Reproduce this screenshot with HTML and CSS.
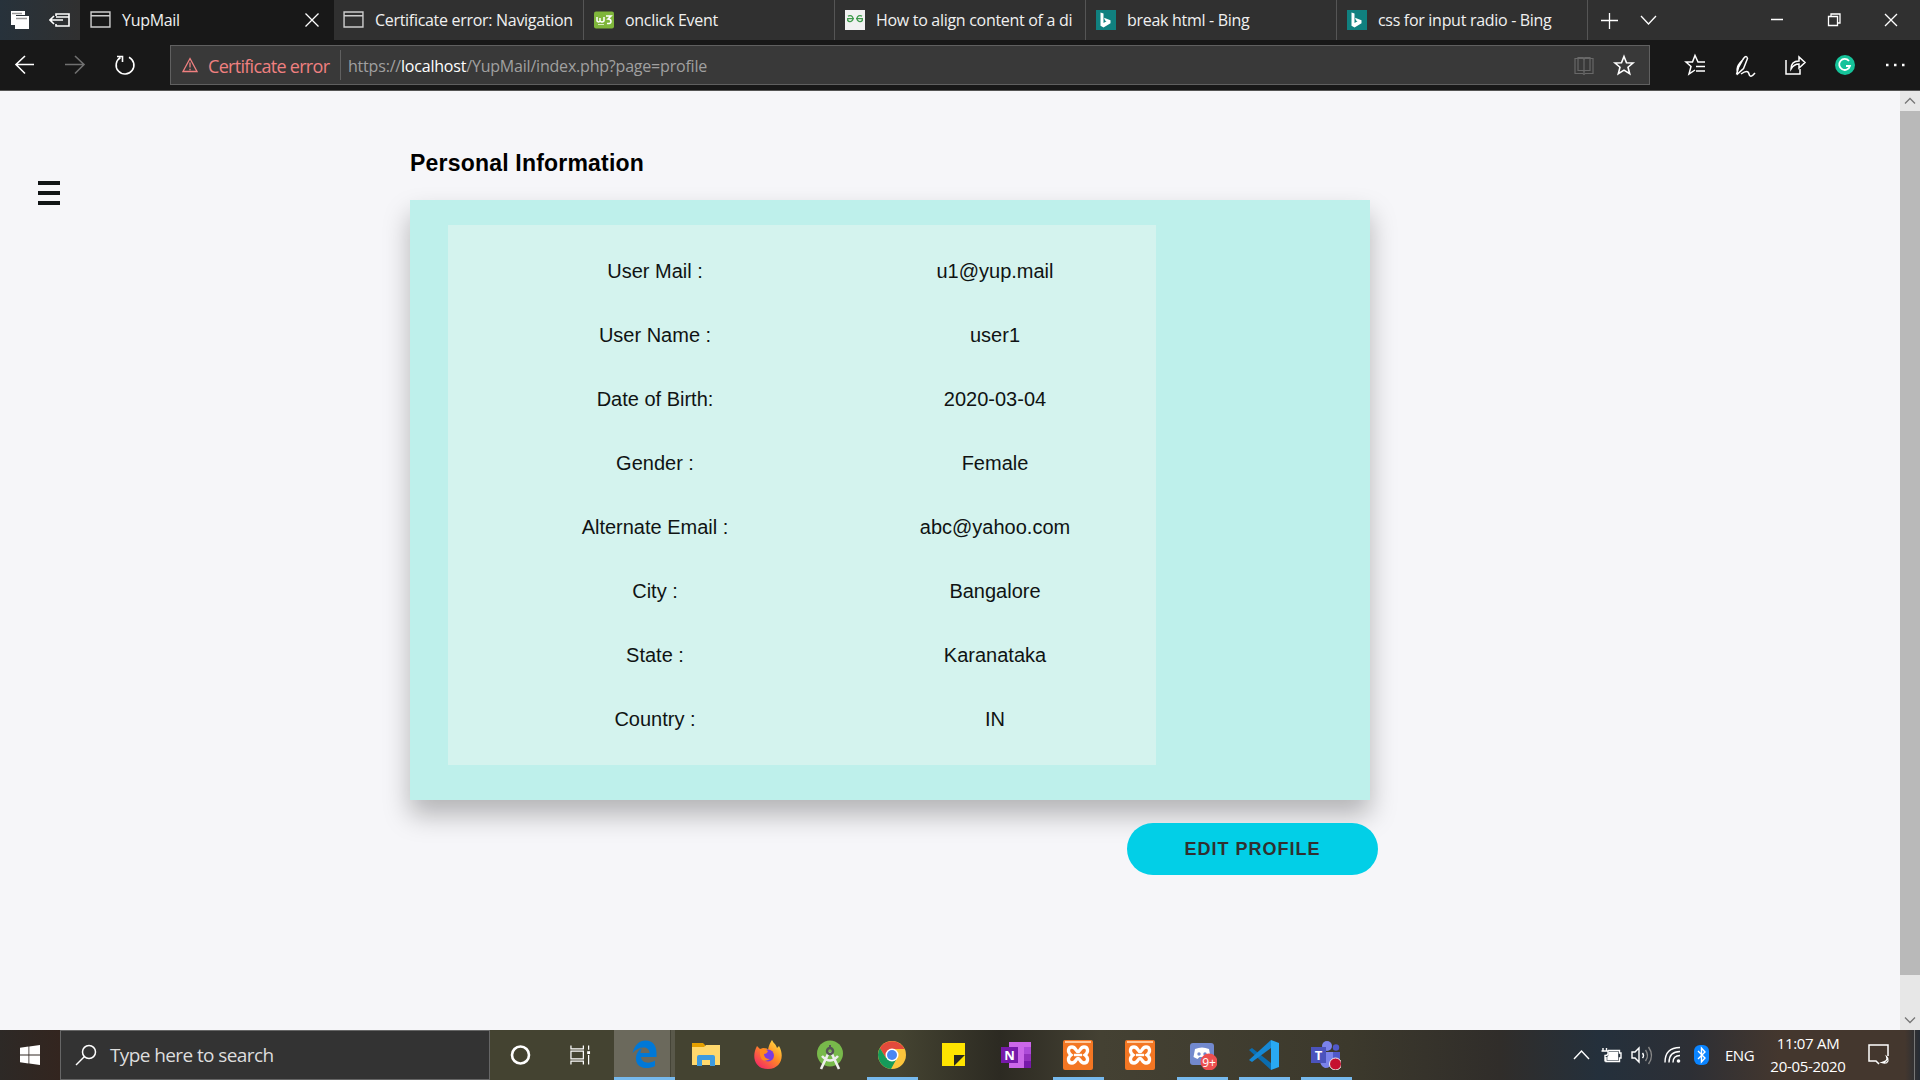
FILE: index.html
```html
<!DOCTYPE html>
<html lang="en">
<head>
<meta charset="utf-8">
<title>YupMail</title>
<link rel="stylesheet" href="styles.css">
</head>
<body>
<header class="tabs">
  <div class="tools">
    <svg width="20" height="24" viewBox="0 0 20 24"><path d="M1 3h14v4H6v10H1z" fill="#fff"/><path d="M5 8h14v13H5z" fill="#fff"/><path d="M2 5.500h10M6 10.500h11" stroke="#999" stroke-width="1.500"/></svg>
    <svg width="22" height="20" viewBox="0 0 22 20" fill="none" stroke="#fff" stroke-width="1.600"><path d="M7 6V4h13v12H7v-2M7 7h13M1 10h13M5 6l-4 4 4 4"/></svg>
  </div>
  <div class="tab first active"><svg class="page" viewBox="0 0 22 18"><path d="M1 1h20v16H1zM1 5h20"/></svg><span>YupMail</span><svg class="close" viewBox="0 0 14 14"><path d="M.5.5l13 13m0-13l-13 13"/></svg></div>
  <div class="tab second"><svg class="page" viewBox="0 0 22 18"><path d="M1 1h20v16H1zM1 5h20"/></svg><span>Certificate error: Navigation</span></div>
  <div class="tab"><svg class="fav" viewBox="0 0 20 20"><rect y="1.500" width="20" height="17" rx="2" fill="#7fb63b"/><path d="M3 7v4q2 2 3 0V8v3q2 2 4 0V7M12 6h5l-3 3q3 0 3 2.500t-4 2" fill="none" stroke="#fff" stroke-width="1.500"/><path d="M4 14.500h6" stroke="#d8ecc0"/></svg><span>onclick Event</span></div>
  <div class="tab"><svg class="fav" viewBox="0 0 20 20"><path fill="#f1f1f1" d="M0 0h20v20H0z"/><path d="M3 6.300A3 3 0 1 1 2.700 10.500V8.700H9M17 6.300A3 3 0 1 0 17.300 10.500V8.700H11" fill="none" stroke="#3f9a4c" stroke-width="1.300"/></svg><span>How to align content of a di</span></div>
  <div class="tab"><svg class="fav" viewBox="0 0 20 20"><path fill="#10807f" d="M0 0h20v20H0z"/><path d="M4.500 2.500l3 1v9.500l3-1.700-1.500-.8-1-2.800 6.500 2.500v3L7.500 17.500l-3-1.800z" fill="#fff"/></svg><span>break html - Bing</span></div>
  <div class="tab"><svg class="fav" viewBox="0 0 20 20"><path fill="#10807f" d="M0 0h20v20H0z"/><path d="M4.500 2.500l3 1v9.500l3-1.700-1.500-.8-1-2.800 6.500 2.500v3L7.500 17.500l-3-1.800z" fill="#fff"/></svg><span>css for input radio - Bing</span></div>
  <svg class="controls" width="331" height="40" viewBox="0 0 331 40" fill="none" stroke="#fff" stroke-width="1.300"><path d="M13 20.500h17M21.500 13v16M53 16l7.500 8 7.500-8M183 19.500h12M240.500 16.500h9v9h-9zM243 16v-2h9v9h-2.500M297 14l12 12m0-12l-12 12"/></svg>
</header>
<nav class="bar">
  <svg class="nav-icons" width="170" height="50" viewBox="0 0 170 50" fill="none" stroke-width="1.600"><path d="M34 24.500H16M25 16l-9 8.500 9 9" stroke="#fff"/><path d="M65 24.500h19M75 16l9 8.500-9 9" stroke="#707070"/><path d="M120.500 17.500a8.900 8.900 0 1 0 8.500-.3M117 16.500h5.500V22" stroke="#fff"/></svg>
  <div class="address">
    <svg width="16" height="16" viewBox="0 0 16 16" fill="none" stroke="#f08080" stroke-width="1.300"><path d="M8 1.500L15 14.500H1zM8 5.500v5M8 11.800v1.400"/></svg>
    <span class="cert">Certificate error</span>
    <span class="url">https://<b>localhost</b>/YupMail/index.php?page=profile</span>
    <svg class="address-icons" width="75" height="38" viewBox="0 0 75 38" fill="none"><path d="M1 12.500h8l1 1 1-1h8v15h-8l-1 1-1-1H1zM10 14v13M4 11.500h5l1 1 1-1h5v13h-5l-1 1-1-1H4z" stroke="#686868" stroke-width="1.200"/><path d="M50 10.500l2.500 6.200 6.500.3-5 4.200 1.700 6.500-5.700-3.600-5.700 3.600L46 21.200 41 17l6.500-.3z" stroke="#fff" stroke-width="1.600"/></svg>
  </div>
  <svg class="actions" width="270" height="50" viewBox="0 0 270 50" fill="none" stroke="#fff" stroke-width="1.500"><path d="M54 22H48L45 15.500l-2.500 6.500H36l5 4.500-2 7.500 6-4M46 26.500h9M48 22h7M46 31h9"/><path d="M86.500 34.500l2-7 5-9q3-4 4 0l-4 10-6 5.500q-1-6 1-9t5-6M91 34q7-5 8 0t6-1"/><path d="M136 20v14h14v-5M141 29q0-8 8-8v-4l6 5.500-6 5.500v-4q-5 0-8 5z"/><circle cx="195" cy="25" r="10" fill="#15c39a" stroke="none"/><path d="M199 21a5.500 5.500 0 1 0 1 5h-4" stroke-width="1.800"/><path d="M236 25h2.500M244 25h2.500M252 25h2.500" stroke-width="2.400"/></svg>
</nav>
<main class="viewport">
  <div class="menu"><i></i><i></i><i></i></div>
  <section class="profile">
    <h1>Personal Information</h1>
    <div class="card">
      <dl class="details">
        <dt>User Mail :</dt><dd>u1@yup.mail</dd>
        <dt>User Name :</dt><dd>user1</dd>
        <dt>Date of Birth:</dt><dd>2020-03-04</dd>
        <dt>Gender :</dt><dd>Female</dd>
        <dt>Alternate Email :</dt><dd>abc@yahoo.com</dd>
        <dt>City :</dt><dd>Bangalore</dd>
        <dt>State :</dt><dd>Karanataka</dd>
        <dt>Country :</dt><dd>IN</dd>
      </dl>
    </div>
    <button class="edit">EDIT PROFILE</button>
  </section>
  <div class="scroll">
    <svg width="20" height="20" viewBox="0 0 20 20"><path d="M5 12.500l5-5 5 5"/></svg>
    <div class="thumb"></div>
    <svg width="20" height="20" viewBox="0 0 20 20"><path d="M5 7.500l5 5 5-5"/></svg>
  </div>
</main>
<footer class="taskbar">
  <div class="start"><svg width="20" height="20" viewBox="0 0 20 20"><path fill="#fff" d="M0 2.800l8.500-1.200v8H0zM9.300 1.500L20 0v9.600H9.300zM0 10.400h8.500v8L0 17.200zM9.300 10.400H20V20L9.300 18.500z"/></svg></div>
  <div class="search"><svg width="22" height="22" viewBox="0 0 22 22" fill="none" stroke="#fff" stroke-width="1.500"><circle cx="14" cy="8" r="6.500"/><path d="M9.500 12.500L1 21"/></svg><span>Type here to search</span></div>
  <div class="app system"><svg width="20" height="20" viewBox="0 0 20 20"><circle cx="10" cy="10" r="8.500" fill="none" stroke="#fff" stroke-width="2.600"/></svg></div>
  <div class="app system"><svg width="22" height="20" viewBox="0 0 22 20" fill="none" stroke="#fff" stroke-width="1.300"><path d="M1 0v3.500h13V0M1 6h13v8H1zM1 20v-3.500h13V20M19.500 0v4.500M19.500 10v10"/><path d="M18 6h3v3h-3z" fill="#fff" stroke="none"/></svg></div>
  <div class="app edge active"><svg viewBox="0 0 30 30"><path d="M2.500 14C4.500 6 9.500 1.500 15.500 1.500c8 0 11.500 6 11 14.500v2H11c.5 6.500 9 7 14 3.500v5.500c-9 4.500-19.500 1.500-19-8 .2-5 3-8.500 6.500-10-1.500 1.500-2 3.500-2 5h9c0-7-10-7.500-17 0z" fill="#0078d7"/></svg></div>
  <div class="app"><svg viewBox="0 0 30 30"><path d="M1 3h11l2 2v5H1z" fill="#e5a000"/><path d="M1 7h12l2-2h14v20H1z" fill="#ffd86d"/><path d="M6 26V17q0-2 2-2h14q2 0 2 2v9h-5v-6h-8v6z" fill="#3d9be0"/></svg></div>
  <div class="app"><svg viewBox="0 0 30 30"><defs><linearGradient id="fire" x1="1" x2="0.200" y2="1"><stop stop-color="#fff04a"/><stop offset=".5" stop-color="#ff8b24"/><stop offset="1" stop-color="#f52667"/></linearGradient></defs><path d="M4 6l3 3 3-1q5 0 5 2c1-5 2-7 4-10 2 4 4 4 5 8l2-2c6 10 2 23-11 23C2 29-2 17 4 6z" fill="url(#fire)"/><circle cx="15" cy="15.500" r="6" fill="#7a3ce0"/><path d="M7 9q6 0 8 2-1 3-4 3 0 5 6 5-8 5-10-4z" fill="#ff8a1e"/></svg></div>
  <div class="app"><svg viewBox="0 0 30 30"><circle cx="15" cy="13.500" r="13" fill="#78b94b"/><path d="M14 12L6 29M16 12l8 17M7 16q8 9 16 0" fill="none" stroke="#eee" stroke-width="2.600"/><circle cx="15" cy="11" r="3" fill="none" stroke="#555" stroke-width="2.500"/><path d="M15 5v3" stroke="#555" stroke-width="2"/></svg></div>
  <div class="app running"><svg viewBox="0 0 30 30"><circle cx="15" cy="15" r="14" fill="#fbc43c"/><path d="M2.900 8A14 14 0 0 1 27.500 9H15l-6 9z" fill="#e34a3c"/><path d="M2.900 8A14 14 0 0 0 14 29l6-11-11 0z" fill="#159b5a"/><circle cx="15" cy="15" r="6.500" fill="#fff"/><circle cx="15" cy="15" r="5" fill="#4a87f2"/></svg></div>
  <div class="app"><svg viewBox="0 0 30 30"><path d="M3 3h23v23H3z" fill="#ffe400"/><path d="M15 15h11L15 26z" fill="#29281e"/><path d="M26 15.500V26H15.500z" fill="#ffe400"/></svg></div>
  <div class="app"><svg viewBox="0 0 30 30"><path d="M8 2h22v26H8z" fill="#cb67e9"/><path d="M23 7h7v7h-7z" fill="#ad4bd8"/><path d="M23 14h7v7h-7z" fill="#9331bd"/><path d="M23 21h7v7h-7z" fill="#7719aa"/><path d="M0 7h17v16H0z" fill="#7719aa"/><text x="8.500" y="20" text-anchor="middle" class="logo-letter">N</text></svg></div>
  <div class="app running"><svg viewBox="0 0 30 30"><rect width="30" height="30" rx="2" fill="#f37623"/><path d="M9 7c4 0 3.500 4.500 6 4.500S17 7 21 7s5 5 1 8c4 3 3 8-1 8s-3.500-4.500-6-4.500S13 23 9 23s-5-5-1-8C4 12 5 7 9 7z" fill="none" stroke="#fff" stroke-width="3.300"/><path d="M11 15h8" stroke="#fff" stroke-width="2.500"/><path d="M2 1h26v2H2z" fill="#ffc799"/></svg></div>
  <div class="app"><svg viewBox="0 0 30 30"><rect width="30" height="30" rx="2" fill="#f37623"/><path d="M9 7c4 0 3.500 4.500 6 4.500S17 7 21 7s5 5 1 8c4 3 3 8-1 8s-3.500-4.500-6-4.500S13 23 9 23s-5-5-1-8C4 12 5 7 9 7z" fill="none" stroke="#fff" stroke-width="3.300"/><path d="M11 15h8" stroke="#fff" stroke-width="2.500"/><path d="M2 1h26v2H2z" fill="#ffc799"/></svg></div>
  <div class="app running"><svg viewBox="0 0 30 30"><rect x="3" y="3" width="24" height="22" rx="3" fill="#7289ce"/><path d="M8 9q7-3 14 0l1.500 8-4 2-2-2h-5l-2 2-4-2z" fill="#fff"/><circle cx="12" cy="14" r="1.700" fill="#7289ce"/><circle cx="18" cy="14" r="1.700" fill="#7289ce"/><circle cx="22" cy="22" r="8.500" fill="#ed5050"/><text x="22" y="26.500" text-anchor="middle" class="badge">9+</text></svg></div>
  <div class="app running"><svg viewBox="0 0 30 30"><path d="M0 10l3-2 19 15v7z" fill="#0b6db0"/><path d="M0 20l3 2L22 8V0z" fill="#1688d4"/><path d="M22 0l8 3v24l-8 3z" fill="#29a9f2"/></svg></div>
  <div class="app running"><svg viewBox="0 0 30 30"><circle cx="16" cy="6" r="5" fill="#7b83eb"/><circle cx="25" cy="7.500" r="3.200" fill="#5059c9"/><path d="M9 12h13v10q-2 6-8 6-5-2-5-8z" fill="#7b83eb"/><path d="M22 12h7v9q-3 5-7 2z" fill="#5059c9"/><path d="M0 7h15v16H0z" fill="#4b53bc"/><text x="7.500" y="19.500" text-anchor="middle" class="logo-letter">T</text><circle cx="24.500" cy="24" r="6" fill="#c50f2f" stroke="#eee" stroke-width="1"/></svg></div>
  <div class="tray">
    <svg width="146" height="30" viewBox="0 0 146 30" fill="none" stroke="#fff" stroke-width="1.400"><path d="M1 19l7.500-8 7.500 8"/><path d="M35 10.500h11.500v2.500h1.500v5h-1.500v3.500H33V17M30 8v3M33.500 8v3M28.500 11h6.500v2.500q0 2-3 2v6"/><path d="M36 12.500h8.500v7H35V17l1-1z" fill="#fff"/><path d="M59 12h3l4-4v14l-4-4h-3z"/><path d="M69.500 13q2 2.500 0 5"/><path d="M72.500 10q4 5.500 0 11M75.500 7q6 8.500 0 17" stroke="#888"/><path d="M92 22.500q0-15 15-15M96 22.500q0-11 11-11M100 22.500q0-7 7-7"/><circle cx="105.500" cy="21" r="1.800" fill="#fff" stroke="none"/><rect x="121" y="5" width="15" height="20" rx="6" fill="#0a84ff" stroke="none"/><path d="M125 11l7 7-3.500 4V8l3.500 4-7 7"/></svg>
    <span class="lang">ENG</span>
    <div class="clock"><span>11:07 AM</span><span>20-05-2020</span></div>
    <svg class="note" width="22" height="22" viewBox="0 0 22 22" fill="none" stroke="#fff" stroke-width="1.500"><path d="M11 20l-3-3H1V1h19v11"/><path d="M18.500 12.500q2 5-5 6 5 2 6.500-1.500.5-3-1.500-4.500z" stroke-width="1.200"/></svg>
  </div>
</footer>
</body>
</html>
```
FILE: styles.css
```css
* { box-sizing: border-box; }
body { margin: 0; width: 1920px; height: 1080px; overflow: hidden; display: flex; flex-direction: column; font-family: "Open Sans", "Noto Sans", sans-serif; background: #f6f6f9; }
svg { flex: none; display: block; }
.tabs { height: 40px; flex: none; display: flex; background: #303030; color: #f0f0f0; }
.tools { width: 80px; background: linear-gradient(90deg, #27323b, #303030); display: flex; align-items: center; gap: 19px; padding-left: 10px; }
.tab { width: 251px; flex: none; display: flex; align-items: center; gap: 11px; padding: 0 10px 1px; border-right: 1px solid #555; font-size: 16px; letter-spacing: -.3px; white-space: nowrap; overflow: hidden; }
.tab span { flex: 1; }
.first { width: 254px; }
.second { width: 250px; padding-left: 9px; padding-right: 8px; }
.active.tab { background: #181818; border: 0; padding-right: 15px; }
.page { width: 21px; height: 17px; fill: none; stroke: #ccc; stroke-width: 1.5; }
.close { width: 14px; height: 14px; stroke: #fff; stroke-width: 1.3; }
.fav { width: 20px; height: 20px; }
.bar { height: 51px; flex: none; display: flex; background: #181818; border-bottom: 1px solid #555; }
.address { width: 1480px; height: 40px; margin-top: 5px; border: 1px solid #606060; background: #393939; display: flex; align-items: center; padding-left: 11px; }
.cert { color: #f08080; font-size: 18px; margin-left: 10px; width: 133px; height: 30px; line-height: 32px; letter-spacing: -.7px; border-right: 1px solid #606060; white-space: nowrap; }
.url { color: #a0a0a0; font-size: 16px; line-height: 22px; padding-top: 2px; letter-spacing: -.2px; margin-left: 7px; flex: 1; }
.url b { font-weight: 400; color: #fff; }
.viewport { height: 939px; flex: none; display: flex; background: #f6f6f9; }
.menu { width: 410px; padding: 90px 0 0 38px; display: flex; flex-direction: column; gap: 6px; }
.menu i { width: 22px; height: 4px; background: #111516; }
.profile { width: 1490px; font-family: "Liberation Sans", Arial, sans-serif; }
h1 { margin: 0; padding-top: 58px; height: 109px; font-size: 23px; line-height: 28px; letter-spacing: .2px; color: #000; }
.card { width: 960px; height: 600px; padding: 25px 38px; background: #bef0eb; box-shadow: 0 15px 25px rgba(0, 0, 0, .27); }
.details { width: 708px; height: 540px; margin: 0; padding: 14px 0 14px 67px; background: #d4f3ee; display: grid; grid-template-columns: 280px 400px; grid-auto-rows: 64px; align-items: center; text-align: center; font-size: 20px; color: #101313; }
.details dd { margin: 0; }
.edit { display: block; width: 251px; height: 52px; margin: 23px 0 0 717px; border: 0; border-radius: 26px; background: #02cfe7; color: #303030; font: bold 18px "Liberation Sans", Arial, sans-serif; letter-spacing: 1px; }
.scroll { width: 20px; background: #e7e7e7; display: flex; flex-direction: column; }
.scroll svg { fill: none; stroke: #777; stroke-width: 1.3; }
.thumb { height: 864px; margin-bottom: 35px; background: #b9b9b9; }
.taskbar { height: 50px; flex: none; display: flex; background: linear-gradient(90deg, #2d2926 0, #33251f 60px, #444331 490px, #444331 900px, #2c2a22 1000px, #444133 1100px, #3c392c 1350px, #302d2a 1500px, #24303c 1600px, #2d2f35 1690px, #44372e 1780px, #44372e 1905px, #262c35 1920px); color: #fff; }
.start { width: 60px; display: flex; align-items: center; justify-content: center; }
.search { width: 430px; background: #333; border: 1px solid #666; display: flex; align-items: center; gap: 13px; padding-left: 14px; font-size: 19px; letter-spacing: -.6px; color: #ddd; }
.app { width: 62px; flex: none; display: flex; align-items: center; justify-content: center; }
.app svg { width: 30px; height: 30px; }
.system { width: 60px; }
.system svg { width: 21px; height: 20px; }
.edge { width: 61px; margin-left: 4px; background: linear-gradient(90deg, #6b695c 0 56px, #454437 56px 57px, #59584a 57px); border-bottom: 3px solid #76b9ed; }
.running { background: linear-gradient(#76b9ed, #76b9ed) center bottom / 51px 3px no-repeat; }
.logo-letter { fill: #fff; font: bold 13px "Open Sans", sans-serif; }
.badge { fill: #fff; font: 12px "Open Sans", sans-serif; }
.tray { margin-left: auto; width: 342px; display: flex; align-items: center; border-right: 1px solid #777; margin-right: 5px; }
.lang { width: 44px; margin-left: 6px; font-size: 15px; letter-spacing: -.5px; }
.clock { width: 78px; display: flex; flex-direction: column; text-align: center; font-size: 15px; line-height: 23px; letter-spacing: -.3px; }
.note { margin-left: 21px; }
```
